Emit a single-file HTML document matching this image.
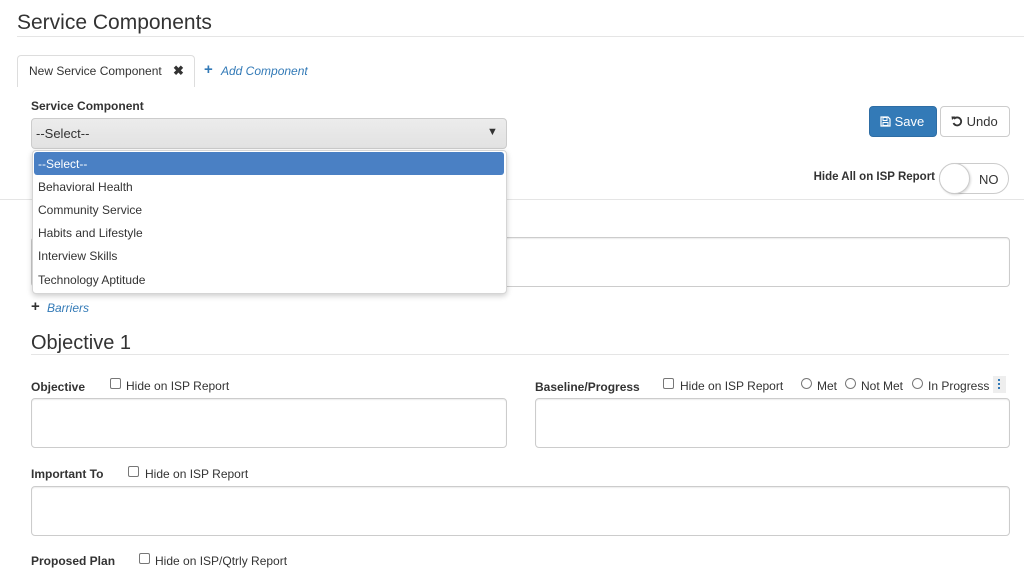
<!DOCTYPE html>
<html><head><style>
*{box-sizing:border-box;margin:0;padding:0}
body{width:1024px;height:572px;overflow:hidden;background:#fff;font-family:"Liberation Sans",Helvetica,Arial,sans-serif;color:#333;position:relative;font-size:12px}
.a{position:absolute;white-space:nowrap}
.ta{position:absolute;border:1px solid #ccc;border-radius:4px;background:#fff;box-shadow:inset 0 1px 1px rgba(0,0,0,.075)}
.b{font-weight:bold;font-size:12px;color:#333}
.cb{position:absolute;width:11px;height:11px;border:1px solid #777;border-radius:2px;background:#fff}
.rd{position:absolute;width:11px;height:11px;border:1px solid #777;border-radius:50%;background:#fff}
.hr{position:absolute;height:1px;background:#e5e5e5}
</style></head><body>
<div class="a" style="left:17px;top:11px;font-size:21px;color:#333">Service Components</div>
<div class="hr" style="left:17px;top:36px;width:1007px"></div>
<div class="a" style="left:17px;top:55px;width:178px;height:32px;border:1px solid #ddd;border-bottom:none;border-radius:4px 4px 0 0;background:#fff"></div>
<div class="a" style="left:29px;top:64px;font-size:12px;color:#333">New Service Component</div>
<div class="a" style="left:173px;top:63px;font-size:13px;font-weight:bold;color:#333">✖</div>
<div class="a" style="left:204px;top:61px;font-size:15px;font-weight:bold;color:#337ab7">+</div>
<div class="a" style="left:221px;top:64px;font-size:12px;font-style:italic;color:#337ab7">Add Component</div>
<div class="a b" style="left:31px;top:99px">Service Component</div>
<div class="a" style="left:31px;top:118px;width:476px;height:31px;border:1px solid #ccc;border-radius:4px;background:linear-gradient(#ececec,#e2e2e2)"></div>
<div class="a" style="left:36px;top:126px;font-size:13px">--Select--</div>
<div class="a" style="left:487px;top:126px;font-size:11px">▼</div>
<div class="a" style="left:869px;top:106px;width:68px;height:31px;background:#337ab7;border:1px solid #2e6da4;border-radius:4px;color:#fff;font-size:13px;padding:7px 0 0 10px">
<svg width="11" height="11" viewBox="0 0 11 11" style="vertical-align:-1px"><path d="M1 1h7l2 2v7H1z" fill="none" stroke="#fff" stroke-width="1.2"/><rect x="3" y="1.5" width="4" height="3" fill="none" stroke="#fff"/><rect x="3" y="6.5" width="5" height="3" fill="none" stroke="#fff"/></svg> Save</div>
<div class="a" style="left:940px;top:106px;width:70px;height:31px;background:#fff;border:1px solid #ccc;border-radius:4px;color:#333;font-size:13px;padding:7px 0 0 10px">
<svg width="12" height="12" viewBox="0 0 12 12" style="vertical-align:-1px"><path d="M3 4A4 4 0 1 1 2.5 8" fill="none" stroke="#333" stroke-width="1.8"/><path d="M0.5 1.5L4.5 1.5 1 5z" fill="#333"/></svg> Undo</div>
<div class="a b" style="right:89px;top:171px;font-size:11.5px">Hide All on ISP Report</div>
<div class="a" style="left:939px;top:163px;width:70px;height:31px;border:1px solid #ccc;border-radius:16px;background:#fff"></div>
<div class="a" style="left:939px;top:163px;width:31px;height:31px;border:1px solid #ccc;border-radius:50%;background:#fff;box-shadow:1px 1px 2px rgba(0,0,0,.15)"></div>
<div class="a" style="left:979px;top:172px;font-size:13px">NO</div>
<div class="hr" style="left:0;top:199px;width:1024px"></div>
<div class="ta" style="left:31px;top:237px;width:979px;height:50px"></div>
<div class="a" style="left:31px;top:298px;font-size:15px;font-weight:bold">+</div>
<div class="a" style="left:47px;top:301px;font-size:12px;font-style:italic;color:#337ab7">Barriers</div>
<div class="a" style="left:31px;top:332px;font-size:20px">Objective 1</div>
<div class="hr" style="left:31px;top:354px;width:978px"></div>
<div class="a b" style="left:31px;top:380px">Objective</div>
<div class="cb" style="left:110px;top:378px"></div>
<div class="a" style="left:126px;top:379px;font-size:12px">Hide on ISP Report</div>
<div class="a b" style="left:535px;top:380px">Baseline/Progress</div>
<div class="cb" style="left:663px;top:378px"></div>
<div class="a" style="left:680px;top:379px">Hide on ISP Report</div>
<div class="rd" style="left:801px;top:378px"></div><div class="a" style="left:817px;top:379px">Met</div>
<div class="rd" style="left:845px;top:378px"></div><div class="a" style="left:861px;top:379px">Not Met</div>
<div class="rd" style="left:912px;top:378px"></div><div class="a" style="left:928px;top:379px">In Progress</div>
<div class="a" style="left:993px;top:376px;width:13px;height:17px;background:#eee"></div>
<div class="a" style="left:998px;top:379px;width:2px;height:2px;background:#337ab7;box-shadow:0 4px 0 #337ab7,0 8px 0 #337ab7"></div>
<div class="ta" style="left:31px;top:398px;width:476px;height:50px"></div>
<div class="ta" style="left:535px;top:398px;width:475px;height:50px"></div>
<div class="a b" style="left:31px;top:467px">Important To</div>
<div class="cb" style="left:128px;top:466px"></div>
<div class="a" style="left:145px;top:467px">Hide on ISP Report</div>
<div class="ta" style="left:31px;top:486px;width:979px;height:50px"></div>
<div class="a b" style="left:31px;top:554px">Proposed Plan</div>
<div class="cb" style="left:139px;top:553px"></div>
<div class="a" style="left:155px;top:554px">Hide on ISP/Qtrly Report</div>
<div class="a" style="left:32px;top:150px;width:475px;height:144px;background:#fff;border:1px solid #d5d5d5;border-radius:4px;box-shadow:0 2px 6px rgba(0,0,0,.2)"></div>
<div class="a" style="left:34px;top:152px;width:470px;height:23px;background:#4a80c4;border-radius:3px"></div>
<div class="a" style="left:38px;top:157px;font-size:12px;color:#fff">--Select--</div>
<div class="a" style="left:38px;top:180px">Behavioral Health</div>
<div class="a" style="left:38px;top:203px">Community Service</div>
<div class="a" style="left:38px;top:226px">Habits and Lifestyle</div>
<div class="a" style="left:38px;top:249px">Interview Skills</div>
<div class="a" style="left:38px;top:273px">Technology Aptitude</div>
</body></html>
